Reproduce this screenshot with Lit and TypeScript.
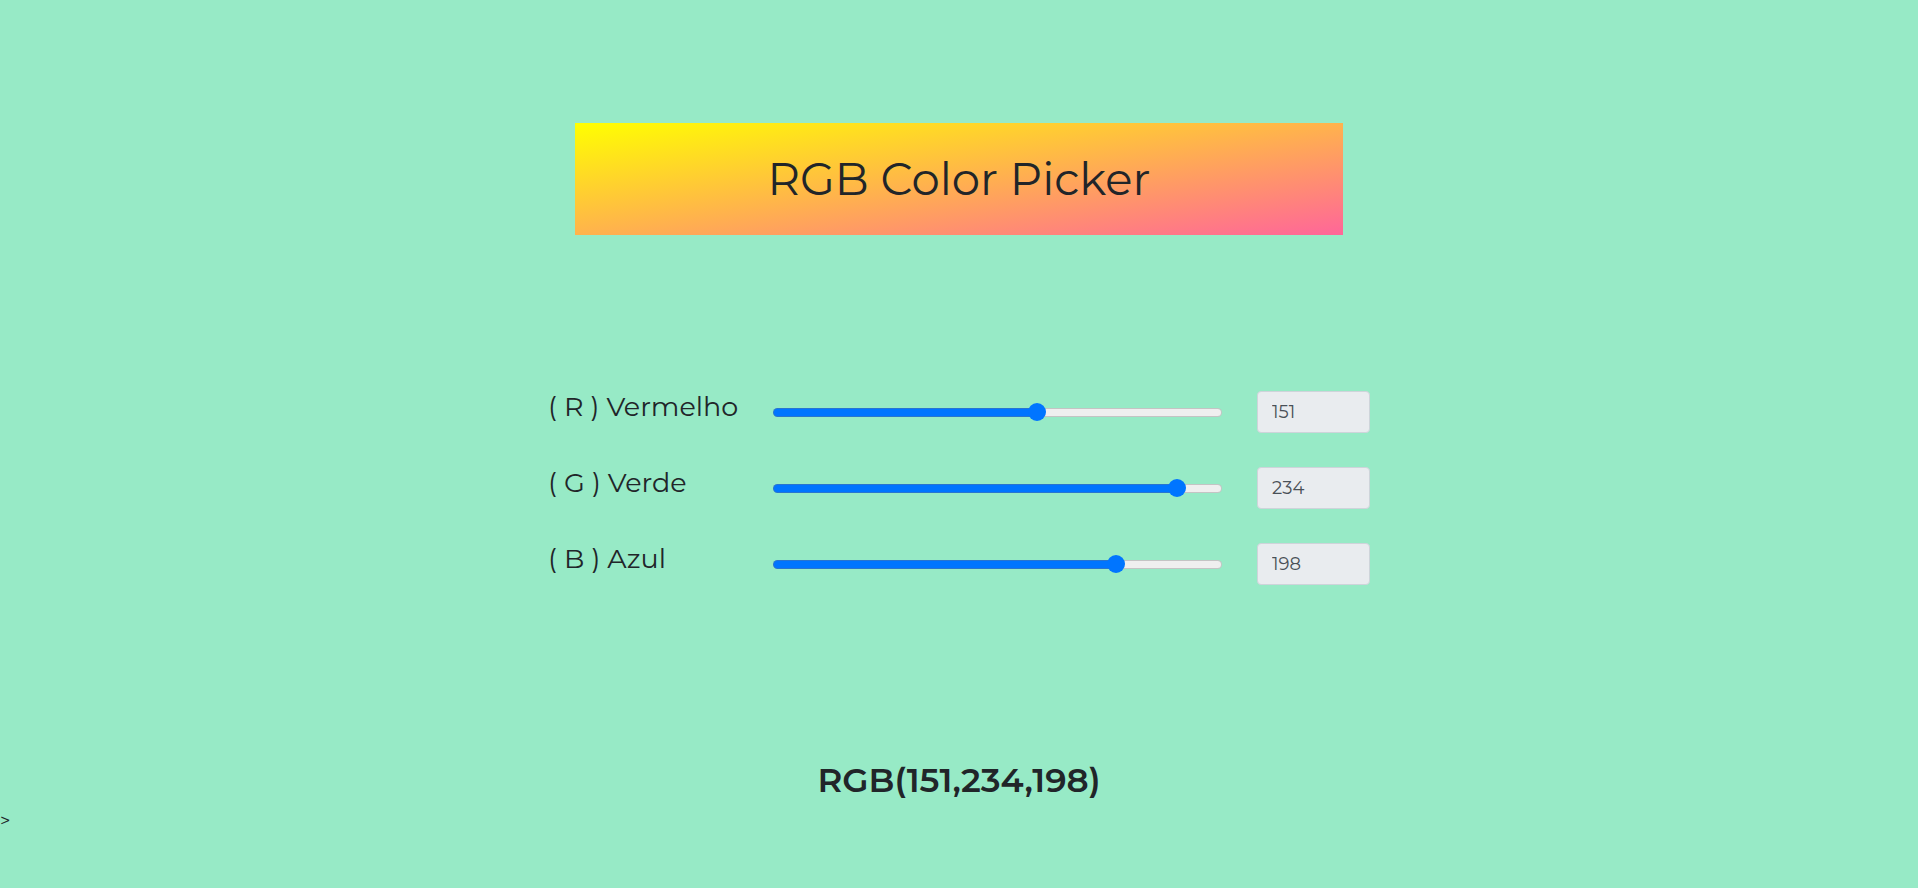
import { LitElement, html, css } from "lit";
import { customElement, state } from "lit/decorators.js";
import { styleMap } from "lit/directives/style-map.js";

const CHANNELS = [
  { id: "red", label: "( R ) Vermelho" },
  { id: "green", label: "( G ) Verde" },
  { id: "blue", label: "( B ) Azul" },
];

@customElement("app-root")
export class AppRoot extends LitElement {
  @state() private values = [151, 234, 198];

  static styles = css`
    :host {
      display: block;
      font-family: Montserrat, Inter, sans-serif;
      font-size: 18px;
      font-weight: 400;
      line-height: 26px;
      color: #212529;
    }
    .page {
      box-sizing: border-box;
      min-height: 100vh;
      padding-top: 123px;
    }
    .title {
      width: 40%;
      margin: 0 auto;
      padding: 28px 0;
      background: linear-gradient(to bottom right, #ffff00, #ff6699);
      font-size: 45px;
      font-weight: 400;
      line-height: 56px;
      text-align: center;
    }
    .channels {
      display: grid;
      grid-template-columns: 190px minmax(0, 449px) 113px;
      justify-content: center;
      align-items: center;
      gap: 34px 35px;
      margin-top: 156px;
    }
    .label {
      padding-bottom: 10px;
      font-size: 27px;
      line-height: 32px;
      white-space: nowrap;
    }
    .slider {
      appearance: none;
      width: 100%;
      height: 18px;
      margin: 0;
      background: transparent;
    }
    .slider::-webkit-slider-runnable-track {
      box-sizing: border-box;
      height: 9px;
      border: 1px solid rgba(118, 118, 118, 0.35);
      border-radius: 5px;
      background: linear-gradient(#0075ff, #0075ff) 0 0 /
        calc(9px + (100% - 18px) * var(--fill)) 100% no-repeat border-box
        #efefef;
    }
    .slider::-webkit-slider-thumb {
      appearance: none;
      width: 18px;
      height: 18px;
      margin-top: -6px;
      border-radius: 50%;
      background: #0075ff;
    }
    .value {
      box-sizing: border-box;
      width: 100%;
      height: 42px;
      padding: 0 14px;
      border: 1px solid #ced4da;
      border-radius: 4px;
      background: #e9ecef;
      color: #495057;
      font: inherit;
    }
    .result {
      margin: 174px 0 0;
      font-size: 34px;
      font-weight: 600;
      line-height: 42px;
      text-align: center;
    }
    .stray {
      margin: 7px 0 0;
    }
  `;

  private setChannel(index: number, event: Event) {
    const next = Number((event.target as HTMLInputElement).value);
    this.values = this.values.map((v, i) => (i === index ? next : v));
  }

  render() {
    const color = this.values.join(",");
    return html`
      <main class="page" style=${styleMap({ backgroundColor: `rgb(${color})` })}>
        <h1 class="title">RGB Color Picker</h1>
        <div class="channels">
          ${CHANNELS.map(
            ({ id, label }, i) => html`
              <label class="label" for=${id}>${label}</label>
              <input
                class="slider"
                type="range"
                id=${id}
                min="0"
                max="255"
                .value=${String(this.values[i])}
                style=${styleMap({ "--fill": `${this.values[i] / 255}` })}
                @input=${(e: Event) => this.setChannel(i, e)}
              />
              <input
                class="value"
                type="text"
                readonly
                aria-label=${label}
                .value=${String(this.values[i])}
              />
            `
          )}
        </div>
        <h2 class="result">RGB(${color})</h2>
        <p class="stray">&gt;</p>
      </main>
    `;
  }
}
